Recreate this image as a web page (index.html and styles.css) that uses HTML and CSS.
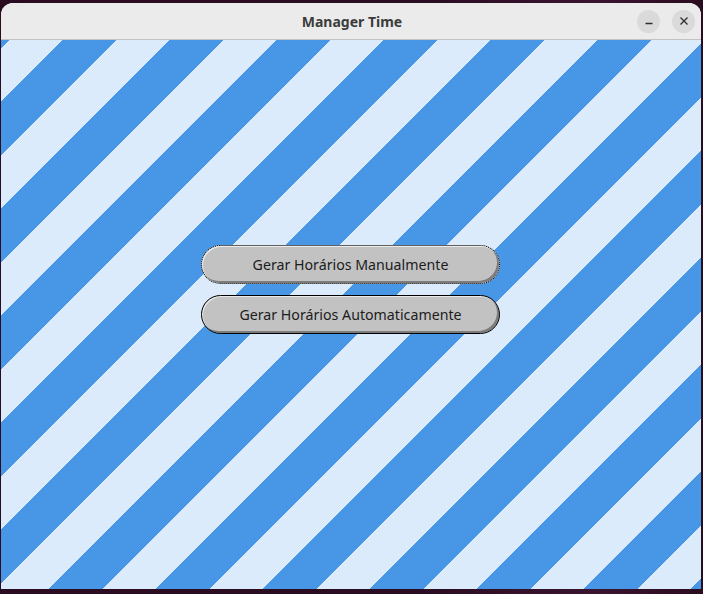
FILE: index.html
```html
<!DOCTYPE html>
<html lang="pt">
<head>
<meta charset="utf-8">
<title>Manager Time</title>
<link rel="stylesheet" href="styles.css">
</head>
<body>
<div class="desktop">
  <div class="window">
    <header class="titlebar">
      <div class="spacer"></div>
      <div class="title">Manager Time</div>
      <div class="controls">
        <button class="wbtn" aria-label="Minimizar">
          <svg width="10" height="10" viewBox="0 0 10 10"><path d="M1.5 7.5h7" stroke="#2e2e2e" stroke-width="1.3" fill="none"/></svg>
        </button>
        <button class="wbtn" aria-label="Fechar">
          <svg width="10" height="10" viewBox="0 0 10 10"><path d="M1.5 1.5l7 7M8.5 1.5l-7 7" stroke="#2e2e2e" stroke-width="1.3" fill="none"/></svg>
        </button>
      </div>
    </header>
    <main class="content">
      <button class="pill focused">Gerar Horários Manualmente</button>
      <button class="pill">Gerar Horários Automaticamente</button>
    </main>
  </div>
</div>
</body>
</html>
```
FILE: styles.css
```css
html, body {
  margin: 0;
  padding: 0;
  height: 100%;
}
body {
  background: #2a0c1f;
  overflow: hidden;
}
.desktop {
  width: 703px;
  height: 594px;
  background: linear-gradient(90deg, #2b0b20 0%, #2a0d22 60%, #3a1430 85%, #2a0c1f 100%);
  padding-top: 3px;
  padding-left: 1px;
  box-sizing: border-box;
}
.window {
  width: 700px;
  height: 586px;
  border-radius: 12px 12px 0 0;
  overflow: hidden;
  display: flex;
  flex-direction: column;
  background: #dcebfb;
}
.titlebar {
  height: 36px;
  flex: none;
  background: #ebebeb;
  border-bottom: 1px solid #c3c3c3;
  display: grid;
  grid-template-columns: 1fr auto 1fr;
  align-items: center;
}
.title {
  font-family: "Noto Sans", "DejaVu Sans", sans-serif;
  font-weight: 700;
  font-size: 14px;
  color: #3c3c3c;
  padding-left: 2px;
}
.controls {
  display: flex;
  justify-content: flex-end;
  gap: 12px;
  padding-right: 6px;
}
.wbtn {
  width: 23px;
  height: 23px;
  border-radius: 50%;
  border: none;
  background: #dadada;
  padding: 0;
  display: flex;
  align-items: center;
  justify-content: center;
}
.content {
  flex: 1;
  display: flex;
  flex-direction: column;
  align-items: center;
  gap: 11px;
  padding-top: 205px;
  padding-right: 1px;
  background-image: linear-gradient(135deg,
    #4896e6 0%, #4896e6 3.97%,
    #dcebfb 3.97%, #dcebfb 28.97%,
    #4896e6 28.97%, #4896e6 53.97%,
    #dcebfb 53.97%, #dcebfb 78.97%,
    #4896e6 78.97%, #4896e6 100%);
  background-size: 107px 107px;
  background-position: 0 0;
  background-repeat: repeat;
}
.pill {
  width: 299px;
  height: 39px;
  border-radius: 20px;
  border: 1px solid #000;
  background: #c2c2c2;
  box-shadow: inset 1px 1px 0 #ececec, inset -2px -2px 0 #7c7c7c;
  font-family: "Noto Sans", "DejaVu Sans", sans-serif;
  font-size: 14.2px;
  color: #1c1c1c;
  padding: 0;
}
.pill.focused {
  border-style: dotted;
}
```
